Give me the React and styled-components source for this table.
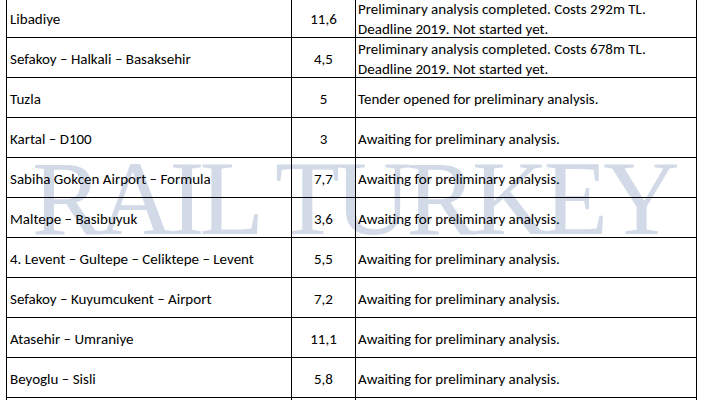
import { Fragment } from "react";
import styled, { createGlobalStyle } from "styled-components";

const GlobalStyle = createGlobalStyle`
  html, body {
    margin: 0;
    padding: 0;
    background: #ffffff;
    overflow: hidden;
  }
`;

const Page = styled.div`
  position: relative;
  width: 706px;
  height: 400px;
  overflow: hidden;
  background: #ffffff;
`;

const Watermark = styled.div`
  position: absolute;
  left: 32px;
  top: 141px;
  font-family: "Liberation Serif", "Times New Roman", serif;
  font-size: 106px;
  line-height: 116px;
  letter-spacing: -5px;
  color: #d2dae8;
  white-space: nowrap;
  z-index: 0;
`;

const Sheet = styled.div`
  position: relative;
  z-index: 1;
  margin: -2px 0 0 6px;
  display: grid;
  grid-template-columns: 285px 64px 341px;
  grid-auto-rows: 40px;
  border-left: 1px solid #000;
  font-family: Carlito, Calibri, Lato, "Liberation Sans", sans-serif;
  font-size: 15px;
  line-height: 20px;
  color: #000;
`;

const Cell = styled.div`
  border-right: 1px solid #000;
  border-bottom: 1px solid #000;
  padding: ${(p) => (p.$tall ? "1px" : "11px")} 2px 0 ${(p) => (p.$pad ?? 2)}px;
  text-align: ${(p) => (p.$center ? "center" : "left")};
  white-space: nowrap;
  overflow: hidden;
`;

const rows = [
  ["Libadiye", "11,6", ["Preliminary analysis completed. Costs 292m TL.", "Deadline 2019. Not started yet."]],
  ["Sefakoy – Halkali – Basaksehir", "4,5", ["Preliminary analysis completed. Costs 678m TL.", "Deadline 2019. Not started yet."]],
  ["Tuzla", "5", ["Tender opened for preliminary analysis."]],
  ["Kartal – D100", "3", ["Awaiting for preliminary analysis."]],
  ["Sabiha Gokcen Airport – Formula", "7,7", ["Awaiting for preliminary analysis."]],
  ["Maltepe – Basibuyuk", "3,6", ["Awaiting for preliminary analysis."]],
  ["4. Levent – Gultepe – Celiktepe – Levent", "5,5", ["Awaiting for preliminary analysis."]],
  ["Sefakoy – Kuyumcukent – Airport", "7,2", ["Awaiting for preliminary analysis."]],
  ["Atasehir – Umraniye", "11,1", ["Awaiting for preliminary analysis."]],
  ["Beyoglu – Sisli", "5,8", ["Awaiting for preliminary analysis."]],
  ["", "", [""]],
];

const App = () => {
  return (
    <Page>
      <GlobalStyle />
      <Watermark>RAIL TURKEY</Watermark>
      <Sheet>
        {rows.map(([line, km, status], i) => (
          <Fragment key={i}>
            <Cell $pad={3}>{line}</Cell>
            <Cell $center>{km}</Cell>
            <Cell $tall={status.length > 1}>
              {status.map((s, j) => (
                <div key={j}>{s}</div>
              ))}
            </Cell>
          </Fragment>
        ))}
      </Sheet>
    </Page>
  );
};

export default App;
